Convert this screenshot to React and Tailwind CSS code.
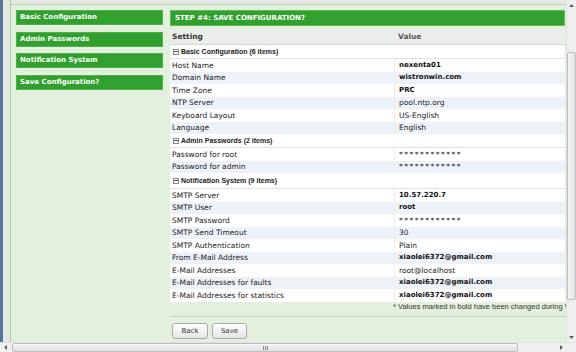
import React from "react";

const groups = [
  {
    title: "Basic Configuration (6 items)",
    rows: [
      ["Host Name", "nexenta01", true],
      ["Domain Name", "wistronwin.com", true],
      ["Time Zone", "PRC", true],
      ["NTP Server", "pool.ntp.org", false],
      ["Keyboard Layout", "US-English", false],
      ["Language", "English", false],
    ],
    h: "h-[14px]",
  },
  {
    title: "Admin Passwords (2 items)",
    rows: [
      ["Password for root", "************", false, true],
      ["Password for admin", "************", false, true],
    ],
    h: "h-[14px]",
  },
  {
    title: "Notification System (9 items)",
    rows: [
      ["SMTP Server", "10.57.220.7", true],
      ["SMTP User", "root", true],
      ["SMTP Password", "************", false, true],
      ["SMTP Send Timeout", "30", false],
      ["SMTP Authentication", "Plain", false],
      ["From E-Mail Address", "xiaolei6372@gmail.com", true],
      ["E-Mail Addresses", "root@localhost", false],
      ["E-Mail Addresses for faults", "xiaolei6372@gmail.com", true],
      ["E-Mail Addresses for statistics", "xiaolei6372@gmail.com", true],
    ],
    h: "h-[16px]",
  },
];

const nav = [
  "Basic Configuration",
  "Admin Passwords",
  "Notification System",
  "Save Configuration?",
];

function MinusBox() {
  return (
    <span className="w-[6px] h-[6px] border border-[#8a8a8a] bg-white flex items-center justify-center mr-[2px]">
      <span className="w-[4px] h-px bg-[#555]" />
    </span>
  );
}

export default function App() {
  return (
    <div
      className="w-[576px] h-[352px] flex flex-col overflow-hidden bg-[#e4f0de]"
      style={{ fontFamily: '"DejaVu Sans", Verdana, sans-serif' }}
    >
      <div className="flex flex-1 min-h-0">
        <div className="flex-1 min-w-0 flex overflow-hidden">
          <div className="w-[3px] bg-[#5a7597] shrink-0" />
          <div className="w-[8px] shrink-0 bg-[#e3e8e1] border-r border-[#a9cfa0]" />
          <div className="flex-1 min-w-0 flex flex-col">
            <div className="h-[5px] shrink-0 bg-[#e6e8e5] border-b border-[#b8d6ae]" />
            <div className="flex-1 flex pt-[5px] pl-[5px] gap-[7px]">
              {/* Left nav */}
              <div className="w-[147px] shrink-0 flex flex-col gap-[6.5px]">
                {nav.map((n) => (
                  <div
                    key={n}
                    className="h-[15px] bg-[#31a02e] border border-[#4fb34b] text-white font-bold text-[7px] flex items-center pl-[3px] leading-none"
                  >
                    {n}
                  </div>
                ))}
              </div>

              {/* Main */}
              <div className="w-[395px] shrink-0 flex flex-col">
                <div className="h-[16px] bg-[#31a02e] border border-[#5dbb58] text-white font-bold text-[7px] flex items-center pl-[4px] leading-none">
                  STEP #4: SAVE CONFIGURATION?
                </div>
                <div className="mt-[3px] flex flex-col">
                  <div className="h-[16px] flex bg-[#eaeeea] border-b border-[#d3d8d2] text-[7.5px] font-bold leading-none">
                    <div className="w-[224px] pl-[2px] flex items-center text-[#333]">Setting</div>
                    <div className="flex-1 pl-[4px] flex items-center text-[#5a5a5a]">Value</div>
                  </div>
                  {groups.map((g) => (
                    <div key={g.title} className="flex flex-col">
                      <div
                        className={`${g.h} bg-white border-b border-[#e2e2e2] flex items-center pl-[3px] text-[7px] font-bold text-[#222] leading-none`}
                        style={{ fontFamily: '"Liberation Sans", Arial, sans-serif' }}
                      >
                        <MinusBox />
                        {g.title}
                      </div>
                      {g.rows.map(([k, v, bold, pw], i) => (
                        <div
                          key={k}
                          className={`h-[12.5px] flex leading-none text-[#222] ${
                            i % 2 === 1 ? "bg-[#edf2f9]" : "bg-white"
                          }`}
                        >
                          <div className="w-[224px] pl-[2px] flex items-center text-[7.5px]">{k}</div>
                          <div
                            className={`flex-1 pl-[4px] flex items-center border-l border-[#ececec] ${
                              bold ? "font-bold text-[7px] text-[#111]" : "text-[7.5px]"
                            } ${pw ? "tracking-[1.5px] text-[7.5px]" : ""}`}
                          >
                            {v}
                          </div>
                        </div>
                      ))}
                    </div>
                  ))}
                  <div
                    className="h-[10px] flex items-center pl-[223px] text-[7.5px] text-[#333] whitespace-nowrap leading-none"
                    style={{ fontFamily: '"Liberation Sans", Arial, sans-serif' }}
                  >
                    * Values marked in bold have been changed during Wizard
                  </div>
                  <div className="mt-[4.5px] h-px bg-[#c3cfbf] w-[400px]" />
                  <div className="mt-[6px] flex gap-[4px] pl-[2px]">
                    <button className="w-[36px] h-[16px] rounded-[3px] border border-[#a9a9a9] bg-gradient-to-b from-white to-[#e6e6e6] text-[7px] text-[#333] leading-none">
                      Back
                    </button>
                    <button className="w-[35px] h-[16px] rounded-[3px] border border-[#a9a9a9] bg-gradient-to-b from-white to-[#e6e6e6] text-[7px] text-[#333] leading-none">
                      Save
                    </button>
                  </div>
                </div>
              </div>
            </div>
          </div>
        </div>

        {/* Vertical scrollbar */}
        <div className="w-[10px] shrink-0 bg-[#efefef] border-l border-[#e0e0e0] flex flex-col items-center">
          <div className="h-[10px] flex items-center justify-center">
            <svg width="5" height="3" viewBox="0 0 5 3">
              <path d="M0 3 L2.5 0 L5 3 Z" fill="#606060" />
            </svg>
          </div>
          <div className="mt-[42px] h-[248px] w-[9px] rounded-[2px] border border-[#bdbdbd] bg-gradient-to-r from-[#f4f4f4] to-[#e2e2e2]" />
          <div className="flex-1" />
          <div className="h-[10px] flex items-center justify-center">
            <svg width="5" height="3" viewBox="0 0 5 3">
              <path d="M0 0 L2.5 3 L5 0 Z" fill="#606060" />
            </svg>
          </div>
        </div>
      </div>

      {/* Horizontal scrollbar */}
      <div className="h-[10px] shrink-0 flex bg-[#efefef] border-t border-[#e0e0e0]">
        <div className="flex-1 flex items-center">
          <div className="w-[10px] h-full flex items-center justify-center">
            <svg width="3" height="5" viewBox="0 0 3 5">
              <path d="M3 0 L0 2.5 L3 5 Z" fill="#606060" />
            </svg>
          </div>
          <div className="ml-[2px] w-[506px] h-[9px] rounded-[2px] border border-[#bdbdbd] bg-gradient-to-b from-[#f6f6f6] to-[#e0e0e0] flex items-center justify-center">
            <div className="flex gap-px">
              <span className="w-px h-[4px] bg-[#8a8a8a]" />
              <span className="w-px h-[4px] bg-[#8a8a8a]" />
              <span className="w-px h-[4px] bg-[#8a8a8a]" />
            </div>
          </div>
          <div className="flex-1" />
          <div className="w-[10px] h-full flex items-center justify-center">
            <svg width="3" height="5" viewBox="0 0 3 5">
              <path d="M0 0 L3 2.5 L0 5 Z" fill="#606060" />
            </svg>
          </div>
        </div>
        <div className="w-[10px] bg-[#efefef]" />
      </div>
    </div>
  );
}
